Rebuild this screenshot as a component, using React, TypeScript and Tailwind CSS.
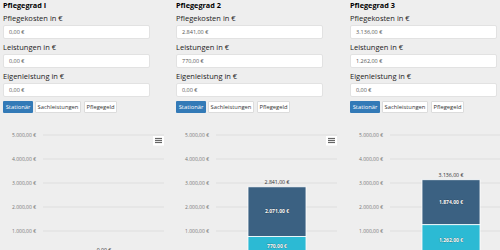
const fmt = (v: number) =>
  v.toLocaleString('de-DE', { minimumFractionDigits: 2, maximumFractionDigits: 2 }) + ' €';

interface Grad {
  title: string;
  kosten: number;
  leistung: number;
}

const grade: Grad[] = [
  { title: 'Pflegegrad I', kosten: 0, leistung: 0 },
  { title: 'Pflegegrad 2', kosten: 2841, leistung: 770 },
  { title: 'Pflegegrad 3', kosten: 3136, leistung: 1262 },
];

function Field({ label, value }: { label: string; value: string }) {
  return (
    <>
      <div className="mt-[3px] h-[10px] text-[7.5px] leading-[10px] text-[#222]">{label}</div>
      <div className="mt-[2px] flex h-[14px] w-[147px] items-center rounded-[2px] border border-[#e2e2e2] bg-white pl-[5px] text-[5.5px] text-[#555]">
        {value}
      </div>
    </>
  );
}

function Chart({ kosten, leistung }: { kosten: number; leistung: number }) {
  const y0 = 137;
  const y = (v: number) => y0 - (v / 1000) * 24;
  const eigen = kosten - leistung;
  const cx = 101;
  return (
    <svg width="175" height="132" className="block overflow-visible">
      {[5000, 4000, 3000, 2000, 1000].map((v) => (
        <g key={v}>
          <line x1="40" x2="161" y1={y(v)} y2={y(v)} stroke="#dedede" strokeWidth="1" />
          <text x="33" y={y(v) + 1.8} textAnchor="end" fontSize="5" fill="#777">
            {fmt(v)}
          </text>
        </g>
      ))}
      <rect x="150" y="18" width="11" height="9.5" fill="#fff" />
      {[20.5, 22.5, 24.5].map((ly) => (
        <line key={ly} x1="152" x2="159" y1={ly} y2={ly} stroke="#666" strokeWidth="1.2" />
      ))}
      {kosten > 0 && (
        <>
          <rect x={cx - 29} y={y(kosten)} width="58" height={y(leistung) - y(kosten)} fill="#3b6182" stroke="#fff" strokeWidth="0.8" />
          <rect x={cx - 29} y={y(leistung)} width="58" height={y0 - y(leistung) + 2} fill="#2cbad4" stroke="#fff" strokeWidth="0.8" />
          <text x={cx} y={(y(kosten) + y(leistung)) / 2 + 1.8} textAnchor="middle" fontSize="5" fontWeight="bold" fill="#fff" stroke="#1a2b3a" strokeWidth="0.4" paintOrder="stroke">
            {fmt(eigen)}
          </text>
          <text x={cx} y={(y(leistung) + y0) / 2 + 1.8} textAnchor="middle" fontSize="5" fontWeight="bold" fill="#fff" stroke="#1a5a66" strokeWidth="0.4" paintOrder="stroke">
            {fmt(leistung)}
          </text>
        </>
      )}
      <text x={cx} y={y(kosten) - 3} textAnchor="middle" fontSize="5.2" fill="#333">
        {fmt(kosten)}
      </text>
    </svg>
  );
}

export default function App() {
  return (
    <div
      className="flex h-[250px] w-[500px] overflow-hidden bg-[#eeeeee] pl-[3px]"
      style={{ fontFamily: '"Open Sans", sans-serif' }}
    >
      {grade.map((g, i) => (
        <div key={g.title} className={i === 0 ? 'w-[173px] shrink-0' : 'w-[174px] shrink-0'}>
          <div className="h-[10px] text-[7.3px] font-bold leading-[10px] text-black">{g.title}</div>
          <Field label="Pflegekosten in €" value={fmt(g.kosten)} />
          <Field label="Leistungen in €" value={fmt(g.leistung)} />
          <Field label="Eigenleistung in €" value={fmt(0)} />
          <div className="mt-[4px] flex h-[12px] gap-[2px] text-[5.8px]">
            <div className="flex w-[30px] items-center justify-center rounded-[1px] bg-[#337ab7] text-white">Stationär</div>
            <div className="flex w-[46px] items-center justify-center rounded-[1px] border border-[#dcdcdc] bg-white text-[#333]">Sachleistungen</div>
            <div className="ml-[1px] flex w-[33px] items-center justify-center rounded-[1px] border border-[#dcdcdc] bg-white text-[#333]">Pflegegeld</div>
          </div>
          <div className="mt-[5px]">
            <Chart kosten={g.kosten} leistung={g.leistung} />
          </div>
        </div>
      ))}
    </div>
  );
}
